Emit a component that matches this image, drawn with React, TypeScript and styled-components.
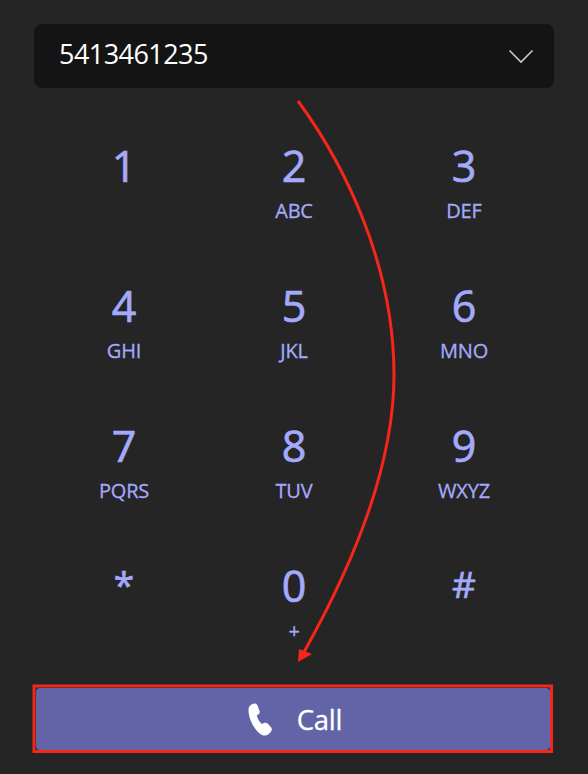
import React from "react";
import styled, { createGlobalStyle } from "styled-components";

const GlobalStyle = createGlobalStyle`
  html, body {
    margin: 0;
    padding: 0;
    background: #252525;
  }
`;

const Screen = styled.div`
  position: relative;
  width: 588px;
  height: 774px;
  box-sizing: border-box;
  padding: 24px 34px 0;
  background: #252525;
  font-family: "Open Sans", "Noto Sans", sans-serif;
  overflow: hidden;
`;

const NumberBox = styled.div`
  height: 64px;
  box-sizing: border-box;
  padding: 0 20px 6px 25px;
  display: flex;
  align-items: center;
  justify-content: space-between;
  background: #141414;
  border-radius: 8px;
  color: #fff;
  font-size: 27px;
  letter-spacing: -0.55px;
  svg {
    margin-top: 6px;
  }
`;

const Pad = styled.div`
  display: grid;
  grid-template-columns: repeat(3, 170px);
  grid-auto-rows: 140px;
  margin: 40px 0 0 5px;
`;

const Key = styled.div`
  display: flex;
  flex-direction: column;
  align-items: center;
  padding-top: 6px;
  color: #a4aafb;
`;

const Digit = styled.div<{ $symbol?: boolean }>`
  height: 64px;
  line-height: 64px;
  font-size: ${(p) => (p.$symbol ? "37px" : "43px")};
  -webkit-text-stroke: 0.7px #a4aafb;
  margin-top: ${(p) => (p.$symbol ? "-2px" : "0")};
`;

const Letters = styled.div`
  margin-top: 1px;
  font-size: 20px;
  line-height: 24px;
  -webkit-text-stroke: 0.3px #a4aafb;
  letter-spacing: -0.2px;
`;

const CallButton = styled.div`
  width: 514px;
  height: 62px;
  box-sizing: border-box;
  padding-left: 4px;
  margin-left: 2px;
  display: flex;
  align-items: center;
  justify-content: center;
  gap: 24px;
  border-radius: 4px;
  background: #6264a7;
  color: #fff;
  font-size: 27.5px;
  -webkit-text-stroke: 0.3px #fff;
  letter-spacing: -0.2px;
`;

const Annotation = styled.svg`
  position: absolute;
  left: 0;
  top: 0;
  pointer-events: none;
`;

const keys = [
  ["1", ""],
  ["2", "ABC"],
  ["3", "DEF"],
  ["4", "GHI"],
  ["5", "JKL"],
  ["6", "MNO"],
  ["7", "PQRS"],
  ["8", "TUV"],
  ["9", "WXYZ"],
  ["*", ""],
  ["0", "+"],
  ["#", ""],
];

function App() {
  return (
    <Screen>
      <GlobalStyle />
      <NumberBox>
        5413461235
        <svg width="26" height="16" viewBox="0 0 26 16" fill="none">
          <path d="M1.5 2.5 L13 14 L24.5 2.5" stroke="#c8c8c8" strokeWidth="1.6" />
        </svg>
      </NumberBox>
      <Pad>
        {keys.map(([digit, letters]) => (
          <Key key={digit}>
            <Digit $symbol={digit === "*" || digit === "#"}>{digit}</Digit>
            {letters && <Letters>{letters}</Letters>}
          </Key>
        ))}
      </Pad>
      <CallButton>
        <svg width="25" height="33" viewBox="0 0 25 33" fill="#fff">
          <path d="M1 4 C2.5 1.5 5 .3 7 .5 C8.5 .7 9.2 1.8 9.8 3.2 L11.6 8.2 C12 9.5 11.6 10.6 10.5 11.3 L8.8 12.5 C9.5 15.5 11.5 19 13.8 21 L16 20 C17.5 19.4 18.6 19.6 19.6 20.6 L23 24.2 C24 25.4 24.2 26.6 23.3 28 C22 30.5 19.5 32.6 16.8 32.6 C13 32.6 8 28 4.5 21.5 C1.5 16 -.5 8.5 1 4 Z" />
        </svg>
        Call
      </CallButton>
      <Annotation width="588" height="774" viewBox="0 0 588 774" fill="none">
        <path d="M298 101 C 345 165 394 265 394 375 C 394 470 350 570 304 652" stroke="#f6261a" strokeWidth="3" />
        <path d="M298 662 L299 649 L312 654 Z" fill="#f6261a" />
        <rect x="34" y="686" width="517.5" height="65.5" stroke="#f6261a" strokeWidth="3" />
      </Annotation>
    </Screen>
  );
}

export default App;
